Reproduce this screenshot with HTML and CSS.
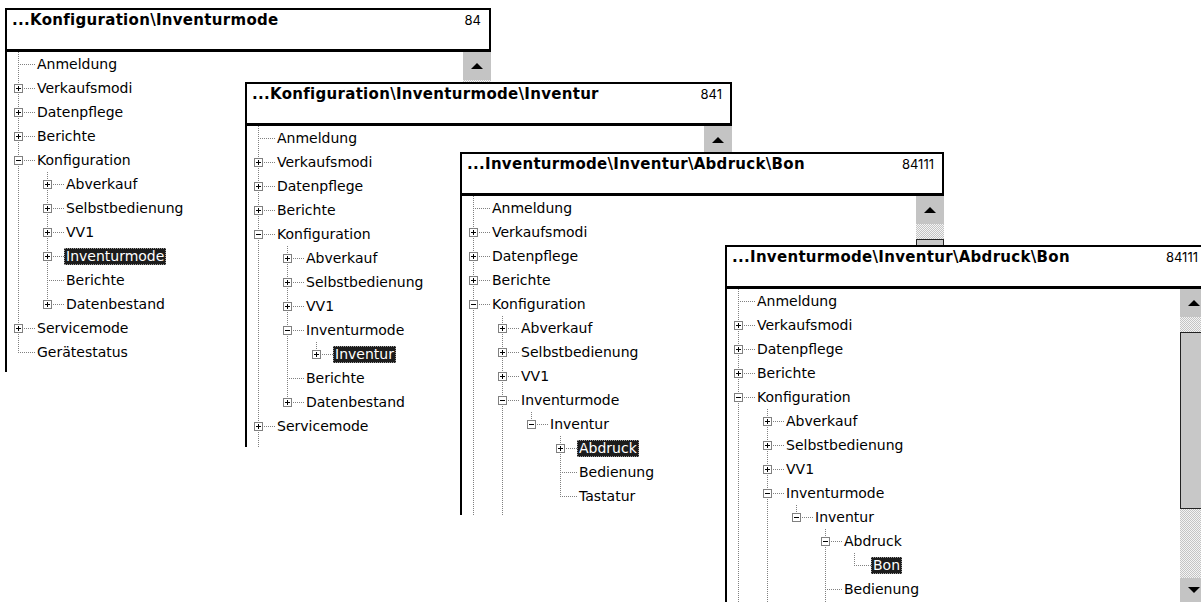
FILE: index.html
```html
<!DOCTYPE html>
<html lang="de">
<head>
<meta charset="utf-8">
<title>Inventurmode</title>
<link rel="stylesheet" href="styles.css">
</head>
<body>
<div class="desk">

  <section class="win w1">
    <header class="head"><span class="title">...Konfiguration\Inventurmode</span><span class="num">84</span></header>
    <div class="body">
      <div class="tree">
        <div class="row"><span class="c t"></span><span class="lbl">Anmeldung</span></div>
        <div class="row"><span class="c t"><i class="bx p"></i></span><span class="lbl">Verkaufsmodi</span></div>
        <div class="row"><span class="c t"><i class="bx p"></i></span><span class="lbl">Datenpflege</span></div>
        <div class="row"><span class="c t"><i class="bx p"></i></span><span class="lbl">Berichte</span></div>
        <div class="row"><span class="c t"><i class="bx m"></i></span><span class="lbl">Konfiguration</span></div>
        <div class="row"><span class="c v"></span><span class="c t"><i class="bx p"></i></span><span class="lbl">Abverkauf</span></div>
        <div class="row"><span class="c v"></span><span class="c t"><i class="bx p"></i></span><span class="lbl">Selbstbedienung</span></div>
        <div class="row"><span class="c v"></span><span class="c t"><i class="bx p"></i></span><span class="lbl">VV1</span></div>
        <div class="row"><span class="c v"></span><span class="c t"><i class="bx p"></i></span><span class="lbl sel">Inventurmode</span></div>
        <div class="row"><span class="c v"></span><span class="c t"></span><span class="lbl">Berichte</span></div>
        <div class="row"><span class="c v"></span><span class="c l"><i class="bx p"></i></span><span class="lbl">Datenbestand</span></div>
        <div class="row"><span class="c t"><i class="bx p"></i></span><span class="lbl">Servicemode</span></div>
        <div class="row"><span class="c l"></span><span class="lbl">Gerätestatus</span></div>
      </div>
      <div class="sb"><div class="btn up"></div><div class="track"><div class="thumb"></div></div><div class="btn down"></div></div>
    </div>
  </section>

  <section class="win w2">
    <header class="head"><span class="title">...Konfiguration\Inventurmode\Inventur</span><span class="num">841</span></header>
    <div class="body">
      <div class="tree">
        <div class="row"><span class="c t"></span><span class="lbl">Anmeldung</span></div>
        <div class="row"><span class="c t"><i class="bx p"></i></span><span class="lbl">Verkaufsmodi</span></div>
        <div class="row"><span class="c t"><i class="bx p"></i></span><span class="lbl">Datenpflege</span></div>
        <div class="row"><span class="c t"><i class="bx p"></i></span><span class="lbl">Berichte</span></div>
        <div class="row"><span class="c t"><i class="bx m"></i></span><span class="lbl">Konfiguration</span></div>
        <div class="row"><span class="c v"></span><span class="c t"><i class="bx p"></i></span><span class="lbl">Abverkauf</span></div>
        <div class="row"><span class="c v"></span><span class="c t"><i class="bx p"></i></span><span class="lbl">Selbstbedienung</span></div>
        <div class="row"><span class="c v"></span><span class="c t"><i class="bx p"></i></span><span class="lbl">VV1</span></div>
        <div class="row"><span class="c v"></span><span class="c t"><i class="bx m"></i></span><span class="lbl">Inventurmode</span></div>
        <div class="row"><span class="c v"></span><span class="c v"></span><span class="c l"><i class="bx p"></i></span><span class="lbl sel">Inventur</span></div>
        <div class="row"><span class="c v"></span><span class="c t"></span><span class="lbl">Berichte</span></div>
        <div class="row"><span class="c v"></span><span class="c l"><i class="bx p"></i></span><span class="lbl">Datenbestand</span></div>
        <div class="row"><span class="c t"><i class="bx p"></i></span><span class="lbl">Servicemode</span></div>
        <div class="row"><span class="c v"></span></div>
      </div>
      <div class="sb"><div class="btn up"></div><div class="track"><div class="thumb"></div></div><div class="btn down"></div></div>
    </div>
  </section>

  <section class="win w3">
    <header class="head"><span class="title">...Inventurmode\Inventur\Abdruck\Bon</span><span class="num">84111</span></header>
    <div class="body">
      <div class="tree">
        <div class="row"><span class="c t"></span><span class="lbl">Anmeldung</span></div>
        <div class="row"><span class="c t"><i class="bx p"></i></span><span class="lbl">Verkaufsmodi</span></div>
        <div class="row"><span class="c t"><i class="bx p"></i></span><span class="lbl">Datenpflege</span></div>
        <div class="row"><span class="c t"><i class="bx p"></i></span><span class="lbl">Berichte</span></div>
        <div class="row"><span class="c t"><i class="bx m"></i></span><span class="lbl">Konfiguration</span></div>
        <div class="row"><span class="c v"></span><span class="c t"><i class="bx p"></i></span><span class="lbl">Abverkauf</span></div>
        <div class="row"><span class="c v"></span><span class="c t"><i class="bx p"></i></span><span class="lbl">Selbstbedienung</span></div>
        <div class="row"><span class="c v"></span><span class="c t"><i class="bx p"></i></span><span class="lbl">VV1</span></div>
        <div class="row"><span class="c v"></span><span class="c t"><i class="bx m"></i></span><span class="lbl">Inventurmode</span></div>
        <div class="row"><span class="c v"></span><span class="c v"></span><span class="c l"><i class="bx m"></i></span><span class="lbl">Inventur</span></div>
        <div class="row"><span class="c v"></span><span class="c v"></span><span class="c e"></span><span class="c t"><i class="bx p"></i></span><span class="lbl sel">Abdruck</span></div>
        <div class="row"><span class="c v"></span><span class="c v"></span><span class="c e"></span><span class="c t"></span><span class="lbl">Bedienung</span></div>
        <div class="row"><span class="c v"></span><span class="c v"></span><span class="c e"></span><span class="c l"></span><span class="lbl">Tastatur</span></div>
        <div class="row"><span class="c v"></span><span class="c v"></span></div>
      </div>
      <div class="sb"><div class="btn up"></div><div class="track"><div class="thumb"></div></div><div class="btn down"></div></div>
    </div>
  </section>

  <section class="win w4">
    <header class="head"><span class="title">...Inventurmode\Inventur\Abdruck\Bon</span><span class="num">84111</span></header>
    <div class="body">
      <div class="tree">
        <div class="row"><span class="c t"></span><span class="lbl">Anmeldung</span></div>
        <div class="row"><span class="c t"><i class="bx p"></i></span><span class="lbl">Verkaufsmodi</span></div>
        <div class="row"><span class="c t"><i class="bx p"></i></span><span class="lbl">Datenpflege</span></div>
        <div class="row"><span class="c t"><i class="bx p"></i></span><span class="lbl">Berichte</span></div>
        <div class="row"><span class="c t"><i class="bx m"></i></span><span class="lbl">Konfiguration</span></div>
        <div class="row"><span class="c v"></span><span class="c t"><i class="bx p"></i></span><span class="lbl">Abverkauf</span></div>
        <div class="row"><span class="c v"></span><span class="c t"><i class="bx p"></i></span><span class="lbl">Selbstbedienung</span></div>
        <div class="row"><span class="c v"></span><span class="c t"><i class="bx p"></i></span><span class="lbl">VV1</span></div>
        <div class="row"><span class="c v"></span><span class="c t"><i class="bx m"></i></span><span class="lbl">Inventurmode</span></div>
        <div class="row"><span class="c v"></span><span class="c v"></span><span class="c l"><i class="bx m"></i></span><span class="lbl">Inventur</span></div>
        <div class="row"><span class="c v"></span><span class="c v"></span><span class="c e"></span><span class="c t"><i class="bx m"></i></span><span class="lbl">Abdruck</span></div>
        <div class="row"><span class="c v"></span><span class="c v"></span><span class="c e"></span><span class="c v"></span><span class="c l"></span><span class="lbl sel">Bon</span></div>
        <div class="row"><span class="c v"></span><span class="c v"></span><span class="c e"></span><span class="c t"></span><span class="lbl">Bedienung</span></div>
        <div class="row"><span class="c v"></span><span class="c v"></span><span class="c e"></span><span class="c v"></span></div>
      </div>
      <div class="sb"><div class="btn up"></div><div class="track"><div class="thumb"></div></div><div class="btn down"></div></div>
    </div>
  </section>

</div>
</body>
</html>
```

FILE: styles.css
```css
html, body {
  margin: 0;
  padding: 0;
  background: #fff;
  overflow: hidden;
}

.desk {
  position: relative;
  width: 1201px;
  height: 602px;
  overflow: hidden;
}

/* windows placed on the free canvas */
.win {
  position: absolute;
  display: flex;
  flex-direction: column;
  background: #fff;
  border-left: 2px solid #000;
  box-sizing: border-box;
  overflow: hidden;
}
.w1 { left: 5px;   top: 8px;   width: 486px; height: 364px; }
.w2 { left: 245px; top: 82px;  width: 487px; height: 365px; }
.w3 { left: 460px; top: 152px; width: 484px; height: 363px; }
.w4 { left: 725px; top: 245px; width: 483px; height: 357px; }

.head {
  flex: none;
  height: 39px;
  border-top: 2px solid #000;
  border-right: 2px solid #000;
  border-bottom: 3px solid #000;
  display: flex;
  align-items: flex-start;
  justify-content: space-between;
  padding: 0 8px 0 5px;
}
.title {
  font: bold 15px/21px "DejaVu Sans", sans-serif;
  letter-spacing: 0.3px;
  color: #000;
  white-space: nowrap;
}
.num {
  font: 13px/21px Inter, "Liberation Sans", sans-serif;
  color: #000;
}

.body {
  flex: 1;
  display: flex;
  min-height: 0;
}

.tree {
  flex: 1;
  display: flex;
  flex-direction: column;
  min-width: 0;
}

.row {
  display: flex;
  align-items: center;
  height: 24px;
  flex: none;
}

/* tree connector cells */
.c {
  flex: none;
  width: 29px;
  height: 24px;
  box-sizing: border-box;
  padding-left: 7px;
  display: flex;
  align-items: flex-start;
  background-repeat: no-repeat;
}
.v {
  background-image: repeating-linear-gradient(180deg, #808080 0 1px, transparent 1px 2px);
  background-size: 1px 100%;
  background-position: 11px 0;
}
.t {
  background-image:
    repeating-linear-gradient(180deg, #808080 0 1px, transparent 1px 2px),
    repeating-linear-gradient(90deg, #808080 0 1px, transparent 1px 2px);
  background-size: 1px 100%, 18px 1px;
  background-position: 11px 0, 11px 12px;
}
.l {
  background-image:
    repeating-linear-gradient(180deg, #808080 0 1px, transparent 1px 2px),
    repeating-linear-gradient(90deg, #808080 0 1px, transparent 1px 2px);
  background-size: 1px 13px, 18px 1px;
  background-position: 11px 0, 11px 12px;
}

.bx {
  display: block;
  width: 9px;
  height: 9px;
  margin-top: 8px;
  box-sizing: border-box;
  border: 1px solid #808080;
  background: #fff;
}
.bx.p {
  background:
    linear-gradient(#000, #000) 1px 3px / 5px 1px no-repeat,
    linear-gradient(#000, #000) 3px 1px / 1px 5px no-repeat,
    #fff;
}
.bx.m {
  background:
    linear-gradient(#000, #000) 1px 3px / 5px 1px no-repeat,
    #fff;
}

.lbl {
  font: 14px/17px "DejaVu Sans", sans-serif;
  color: #000;
  padding: 0 2px;
  margin-left: -1px;
  white-space: nowrap;
}
.sel {
  background: #1c1c1c;
  color: #fff;
  outline: 1px dotted #9a9a9a;
  outline-offset: -1px;
}

/* scrollbar */
.sb {
  flex: none;
  width: 28px;
  display: flex;
  flex-direction: column;
}
.btn {
  flex: none;
  height: 28px;
  background: #c4c4c4;
  display: flex;
  align-items: center;
  justify-content: center;
}
.btn::before {
  content: "";
  width: 0;
  height: 0;
  border-left: 6px solid transparent;
  border-right: 6px solid transparent;
}
.up::before { border-bottom: 6px solid #000; }
.down::before { border-top: 6px solid #000; }
.track {
  flex: 1;
  display: flex;
  flex-direction: column;
  background: repeating-conic-gradient(#c4c4c4 0 25%, #f4f4f4 0 50%) 0 0 / 2px 2px;
}
.thumb {
  margin-top: 15px;
  height: 177px;
  box-sizing: border-box;
  background: #c8c8c8;
  border: 1px solid #222;
}
.w4 .btn.down { height: 24px; align-items: flex-start; padding-top: 9px; box-sizing: border-box; }
```
